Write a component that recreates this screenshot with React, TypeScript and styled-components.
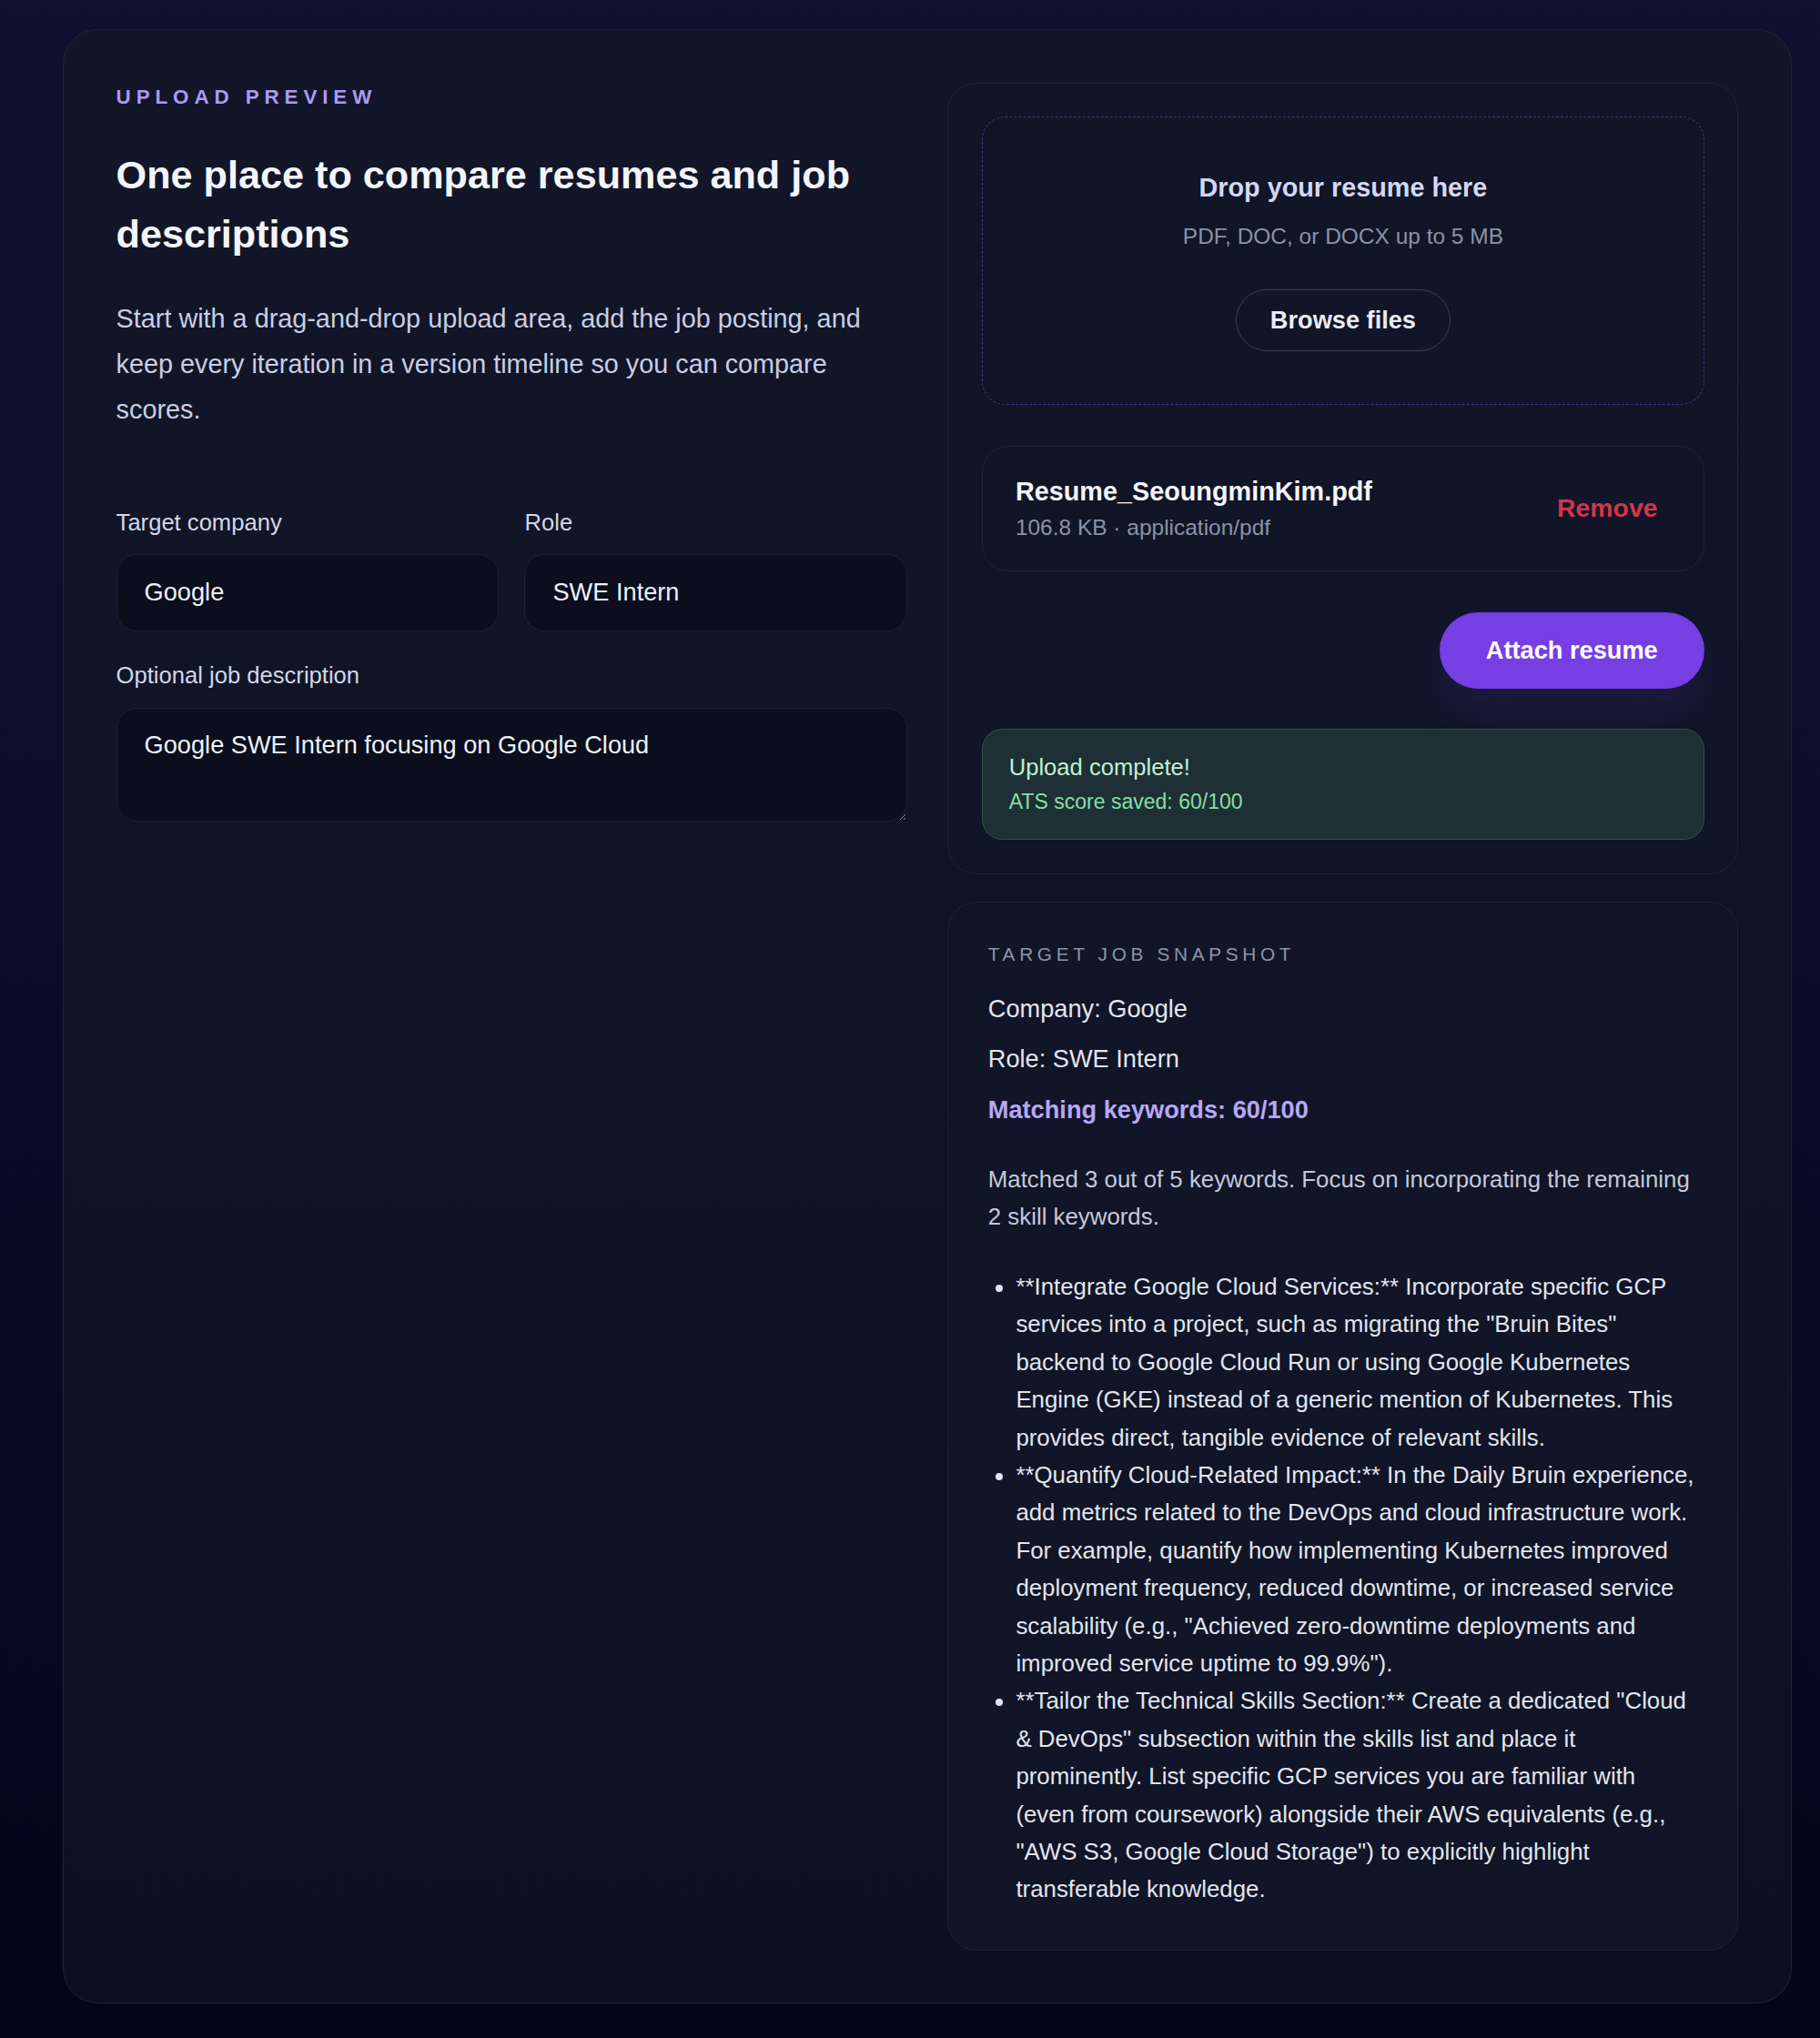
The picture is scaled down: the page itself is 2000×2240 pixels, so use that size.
import React from "react";
import styled, { createGlobalStyle } from "styled-components";

const GlobalStyle = createGlobalStyle`
  html, body {
    margin: 0;
    padding: 0;
    background: #070a1f;
  }
  body {
    font-family: "Liberation Sans", Arial, Helvetica, sans-serif;
    -webkit-font-smoothing: antialiased;
  }
  * { box-sizing: border-box; }
`;

const Page = styled.div`
  min-height: 2240px;
  padding: 32px 31px 38px 69px;
  background: linear-gradient(180deg, #0f1131 0%, #0b0d29 45%, #060920 75%, #03061a 100%);
`;

const Shell = styled.main`
  display: grid;
  grid-template-columns: 1fr 1fr;
  column-gap: 44.8px;
  align-items: start;
  padding: 57.6px;
  border: 1px solid #1f2538;
  border-radius: 38.4px;
  background: linear-gradient(180deg, #121628 0%, #0f1427 45%, #0b1021 100%);
`;

const Column = styled.section`
  display: flex;
  flex-direction: column;
  min-width: 0;
`;

const RightColumn = styled(Column)`
  gap: 30px;
`;

const Eyebrow = styled.div`
  margin: 0;
  font-size: 22.4px;
  line-height: 31.4px;
  font-weight: 700;
  letter-spacing: 5.9px;
  text-transform: uppercase;
  color: #a99bf1;
`;

const Title = styled.h1`
  margin: 37.8px 0 0;
  font-size: 43.2px;
  line-height: 64.8px;
  font-weight: 700;
  color: #f3f5fb;
`;

const Lead = styled.p`
  margin: 35.6px 0 0;
  font-size: 28.8px;
  line-height: 50px;
  color: #c9cee3;
`;

const Form = styled.div`
  margin-top: 84px;
  display: flex;
  flex-direction: column;
  gap: 33px;
`;

const FieldRow = styled.div`
  display: grid;
  grid-template-columns: 1fr 1fr;
  column-gap: 28.8px;
`;

const Field = styled.label`
  display: flex;
  flex-direction: column;
  gap: 19px;
`;

const LabelText = styled.span`
  font-size: 25.6px;
  line-height: 30.7px;
  color: #d3d7e6;
`;

const fieldBase = `
  width: 100%;
  font-family: "Liberation Sans", Arial, Helvetica, sans-serif;
  font-size: 27.2px;
  color: #eef1f8;
  background: #0a0e1d;
  border: 1px solid #1c2235;
  border-radius: 22.4px;
  outline: none;
  padding: 0 30px;
`;

const TextInput = styled.input`
  ${fieldBase}
  height: 85px;
`;

const TextArea = styled.textarea`
  ${fieldBase}
  height: 125px;
  margin-top: 2px;
  padding-top: 24px;
  line-height: 31.3px;
  resize: vertical;
  display: block;
`;

const Panel = styled.div<{ $pad: string; $gap?: string }>`
  display: flex;
  flex-direction: column;
  gap: ${(p) => p.$gap || "0"};
  padding: ${(p) => p.$pad};
  border: 1px solid #1e2437;
  border-radius: 32px;
  background: #101527;
`;

const DropZone = styled.div`
  display: flex;
  flex-direction: column;
  align-items: center;
  padding: 58px 24px 57.6px;
  border: 1px dashed rgba(112, 92, 232, 0.5);
  border-radius: 25.6px;
  text-align: center;
`;

const DropTitle = styled.div`
  font-size: 28.8px;
  line-height: 38px;
  font-weight: 700;
  color: #d3d8f2;
`;

const DropHint = styled.div`
  margin-top: 20.4px;
  font-size: 24.48px;
  line-height: 30px;
  color: #8b93a8;
`;

const GhostButton = styled.button`
  margin-top: 43px;
  height: 68px;
  padding: 0 37px;
  font-family: inherit;
  font-size: 27.2px;
  font-weight: 700;
  color: #e9ecf5;
  background: transparent;
  border: 1px solid #3a4154;
  border-radius: 999px;
  cursor: pointer;
`;

const FileCard = styled.div`
  display: flex;
  align-items: center;
  justify-content: space-between;
  height: 138px;
  padding: 0 36px;
  border: 1px solid #1e2535;
  border-radius: 28.8px;
  background: #101527;
`;

const FileInfo = styled.div`
  display: flex;
  flex-direction: column;
  gap: 8px;
`;

const FileName = styled.div`
  font-size: 28.8px;
  line-height: 34.6px;
  font-weight: 700;
  color: #f4f6fb;
`;

const FileMeta = styled.div`
  font-size: 24.48px;
  line-height: 28.8px;
  color: #8a93a8;
`;

const DangerLink = styled.button`
  padding: 0 14.4px;
  font-family: inherit;
  font-size: 28.4px;
  font-weight: 700;
  color: #d3364d;
  background: none;
  border: none;
  cursor: pointer;
`;

const Actions = styled.div`
  display: flex;
  justify-content: flex-end;
`;

const PrimaryButton = styled.button`
  height: 84px;
  padding: 0 51.2px;
  font-family: inherit;
  font-size: 27.2px;
  font-weight: 700;
  color: #ffffff;
  background: #763fe4;
  border: none;
  border-radius: 999px;
  box-shadow: 0 24px 50px rgba(118, 63, 228, 0.14);
  cursor: pointer;
`;

const Notice = styled.div`
  display: flex;
  flex-direction: column;
  gap: 9px;
  padding: 26px 28.8px 27px;
  border: 1px solid #2b5a40;
  border-radius: 22.4px;
  background: #1e2f35;
`;

const NoticeTitle = styled.div`
  font-size: 25.6px;
  line-height: 30.7px;
  color: #c3f0d0;
`;

const NoticeDetail = styled.div`
  font-size: 23.04px;
  line-height: 27px;
  color: #84e0a3;
`;

const SnapshotLabel = styled.div`
  font-size: 20.8px;
  line-height: 26px;
  letter-spacing: 4.66px;
  text-transform: uppercase;
  color: #8d96aa;
`;

const SnapshotLine = styled.p<{ $accent?: boolean; $first?: boolean }>`
  margin: ${(p) => (p.$first ? "26.8px" : "14.4px")} 0 0;
  font-size: 27.2px;
  line-height: 40.8px;
  font-weight: ${(p) => (p.$accent ? 700 : 400)};
  color: ${(p) => (p.$accent ? "#b8a7f7" : "#e3e6ef")};
`;

const Summary = styled.p`
  margin: 35.5px 0 0;
  font-size: 25.84px;
  line-height: 41.4px;
  color: #c3c9dc;
`;

const TipList = styled.ul`
  margin: 35.2px 0 0;
  padding-left: 30.6px;
  font-size: 25.84px;
  line-height: 41.4px;
  color: #e2e5ee;
`;

const tips = [
  '**Integrate Google Cloud Services:** Incorporate specific GCP services into a project, such as migrating the "Bruin Bites" backend to Google Cloud Run or using Google Kubernetes Engine (GKE) instead of a generic mention of Kubernetes. This provides direct, tangible evidence of relevant skills.',
  '**Quantify Cloud-Related Impact:** In the Daily Bruin experience, add metrics related to the DevOps and cloud infrastructure work. For example, quantify how implementing Kubernetes improved deployment frequency, reduced downtime, or increased service scalability (e.g., "Achieved zero-downtime deployments and improved service uptime to 99.9%").',
  '**Tailor the Technical Skills Section:** Create a dedicated "Cloud & DevOps" subsection within the skills list and place it prominently. List specific GCP services you are familiar with (even from coursework) alongside their AWS equivalents (e.g., "AWS S3, Google Cloud Storage") to explicitly highlight transferable knowledge.',
];

export default function App() {
  return (
    <>
      <GlobalStyle />
      <Page>
        <Shell>
          <Column>
            <Eyebrow>Upload preview</Eyebrow>
            <Title>One place to compare resumes and job descriptions</Title>
            <Lead>
              Start with a drag-and-drop upload area, add the job posting, and keep every
              iteration in a version timeline so you can compare scores.
            </Lead>
            <Form>
              <FieldRow>
                <Field>
                  <LabelText>Target company</LabelText>
                  <TextInput readOnly value="Google" />
                </Field>
                <Field>
                  <LabelText>Role</LabelText>
                  <TextInput readOnly value="SWE Intern" />
                </Field>
              </FieldRow>
              <Field>
                <LabelText>Optional job description</LabelText>
                <TextArea readOnly value="Google SWE Intern focusing on Google Cloud" />
              </Field>
            </Form>
          </Column>

          <RightColumn>
            <Panel $pad="36.5px" $gap="44.8px">
              <DropZone>
                <DropTitle>Drop your resume here</DropTitle>
                <DropHint>PDF, DOC, or DOCX up to 5 MB</DropHint>
                <GhostButton type="button">Browse files</GhostButton>
              </DropZone>
              <FileCard>
                <FileInfo>
                  <FileName>Resume_SeoungminKim.pdf</FileName>
                  <FileMeta>106.8 KB · application/pdf</FileMeta>
                </FileInfo>
                <DangerLink type="button">Remove</DangerLink>
              </FileCard>
              <Actions>
                <PrimaryButton type="button">Attach resume</PrimaryButton>
              </Actions>
              <Notice>
                <NoticeTitle>Upload complete!</NoticeTitle>
                <NoticeDetail>ATS score saved: 60/100</NoticeDetail>
              </Notice>
            </Panel>

            <Panel $pad="44.8px 44.8px 44.8px 43.4px">
              <SnapshotLabel>Target job snapshot</SnapshotLabel>
              <SnapshotLine $first>Company: Google</SnapshotLine>
              <SnapshotLine>Role: SWE Intern</SnapshotLine>
              <SnapshotLine $accent>Matching keywords: 60/100</SnapshotLine>
              <Summary>
                Matched 3 out of 5 keywords. Focus on incorporating the remaining 2 skill
                keywords.
              </Summary>
              <TipList>
                {tips.map((t) => (
                  <li key={t.slice(0, 20)}>{t}</li>
                ))}
              </TipList>
            </Panel>
          </RightColumn>
        </Shell>
      </Page>
    </>
  );
}
